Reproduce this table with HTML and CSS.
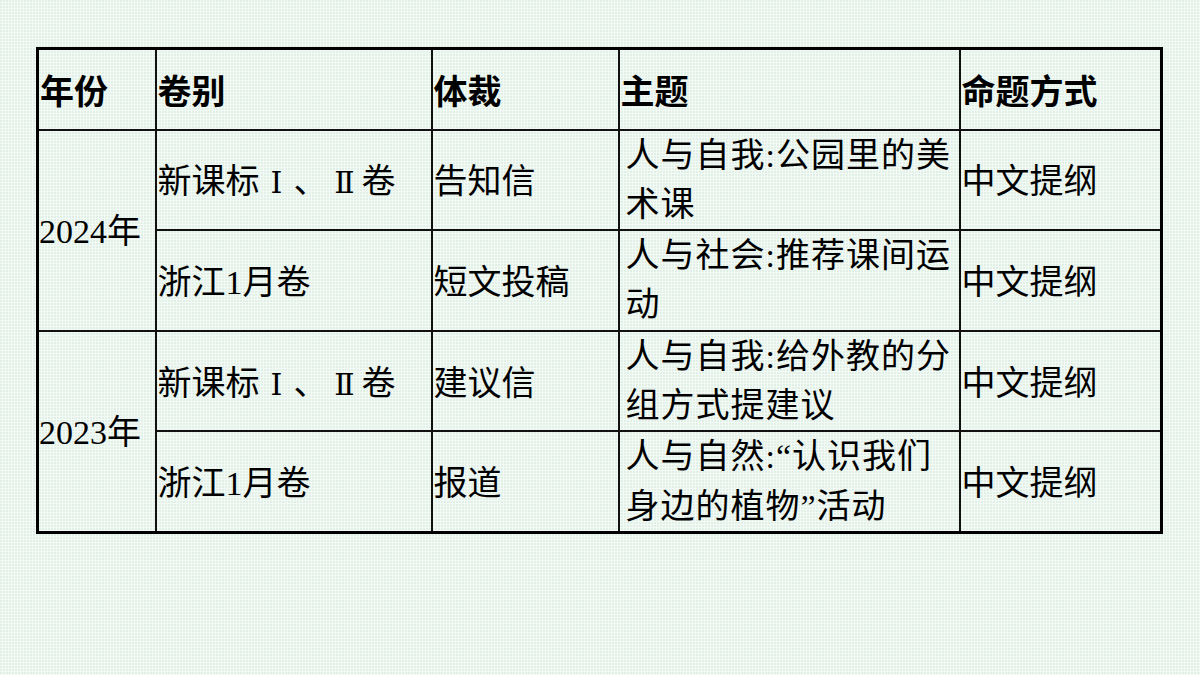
FILE: index.html
```html
<!DOCTYPE html>
<html lang="zh-CN">
<head>
<meta charset="utf-8">
<title>写作命题</title>
<link rel="stylesheet" href="styles.css">
</head>
<body>
<div class="page">
  <table class="grid">
    <colgroup>
      <col class="c-year">
      <col class="c-paper">
      <col class="c-genre">
      <col class="c-theme">
      <col class="c-mode">
    </colgroup>
    <thead>
      <tr class="row-head">
        <th>年份</th>
        <th>卷别</th>
        <th>体裁</th>
        <th>主题</th>
        <th>命题方式</th>
      </tr>
    </thead>
    <tbody>
      <tr class="row-a">
        <td class="year" rowspan="2">2024年</td>
        <td>新课标<span class="rn">Ⅰ</span>、<span class="rn">Ⅱ</span>卷</td>
        <td>告知信</td>
        <td class="theme">人与自我:公园里的美<br>术课</td>
        <td>中文提纲</td>
      </tr>
      <tr class="row-b">
        <td>浙江1月卷</td>
        <td>短文投稿</td>
        <td class="theme">人与社会:推荐课间运<br>动</td>
        <td>中文提纲</td>
      </tr>
      <tr class="row-a">
        <td class="year" rowspan="2">2023年</td>
        <td>新课标<span class="rn">Ⅰ</span>、<span class="rn">Ⅱ</span>卷</td>
        <td>建议信</td>
        <td class="theme">人与自我:给外教的分<br>组方式提建议</td>
        <td>中文提纲</td>
      </tr>
      <tr class="row-b">
        <td>浙江1月卷</td>
        <td>报道</td>
        <td class="theme">人与自然:“认识我们<br>身边的植物”活动</td>
        <td>中文提纲</td>
      </tr>
    </tbody>
  </table>
</div>
</body>
</html>
```

FILE: styles.css
```css
html, body {
  margin: 0;
  padding: 0;
}

body {
  width: 1200px;
  height: 675px;
  background-color: #f3f9f5;
  background-image: radial-gradient(circle at 1px 1px, #e0efe5 0.7px, transparent 1.1px);
  background-size: 3px 3px;
  color: #000;
  font-family: "Liberation Serif", "Noto Sans CJK SC", serif;
}

.page {
  padding: 47px 0 0 36px;
}

.grid {
  border-collapse: collapse;
  table-layout: fixed;
  width: 1127px;
  border: 3px solid #000;
}

.c-year { width: 118px; }
.c-paper { width: 276px; }
.c-genre { width: 187px; }
.c-theme { width: 341px; }
.c-mode { width: 202px; }

.grid th,
.grid td {
  border: 2px solid #111;
  padding: 6px 0 0 1px;
  vertical-align: middle;
  text-align: left;
  white-space: nowrap;
  font-size: 34px;
  line-height: 1.2;
}

.grid th {
  font-family: "Noto Sans CJK SC", sans-serif;
  font-weight: 700;
  padding-top: 3px;
}

.row-head { height: 81px; }
.row-a { height: 100px; }
.row-b { height: 100px; }

.grid td.year {
  padding-left: 0;
  padding-top: 4px;
}

.rn {
  display: inline-block;
  width: 34px;
  text-align: center;
  font-family: "DejaVu Serif", "Liberation Serif", "Noto Sans CJK SC", serif;
  font-size: 30px;
}

.grid td.theme {
  padding: 0 0 0 6px;
  line-height: 49.3px;
  letter-spacing: 1px;
}
```
